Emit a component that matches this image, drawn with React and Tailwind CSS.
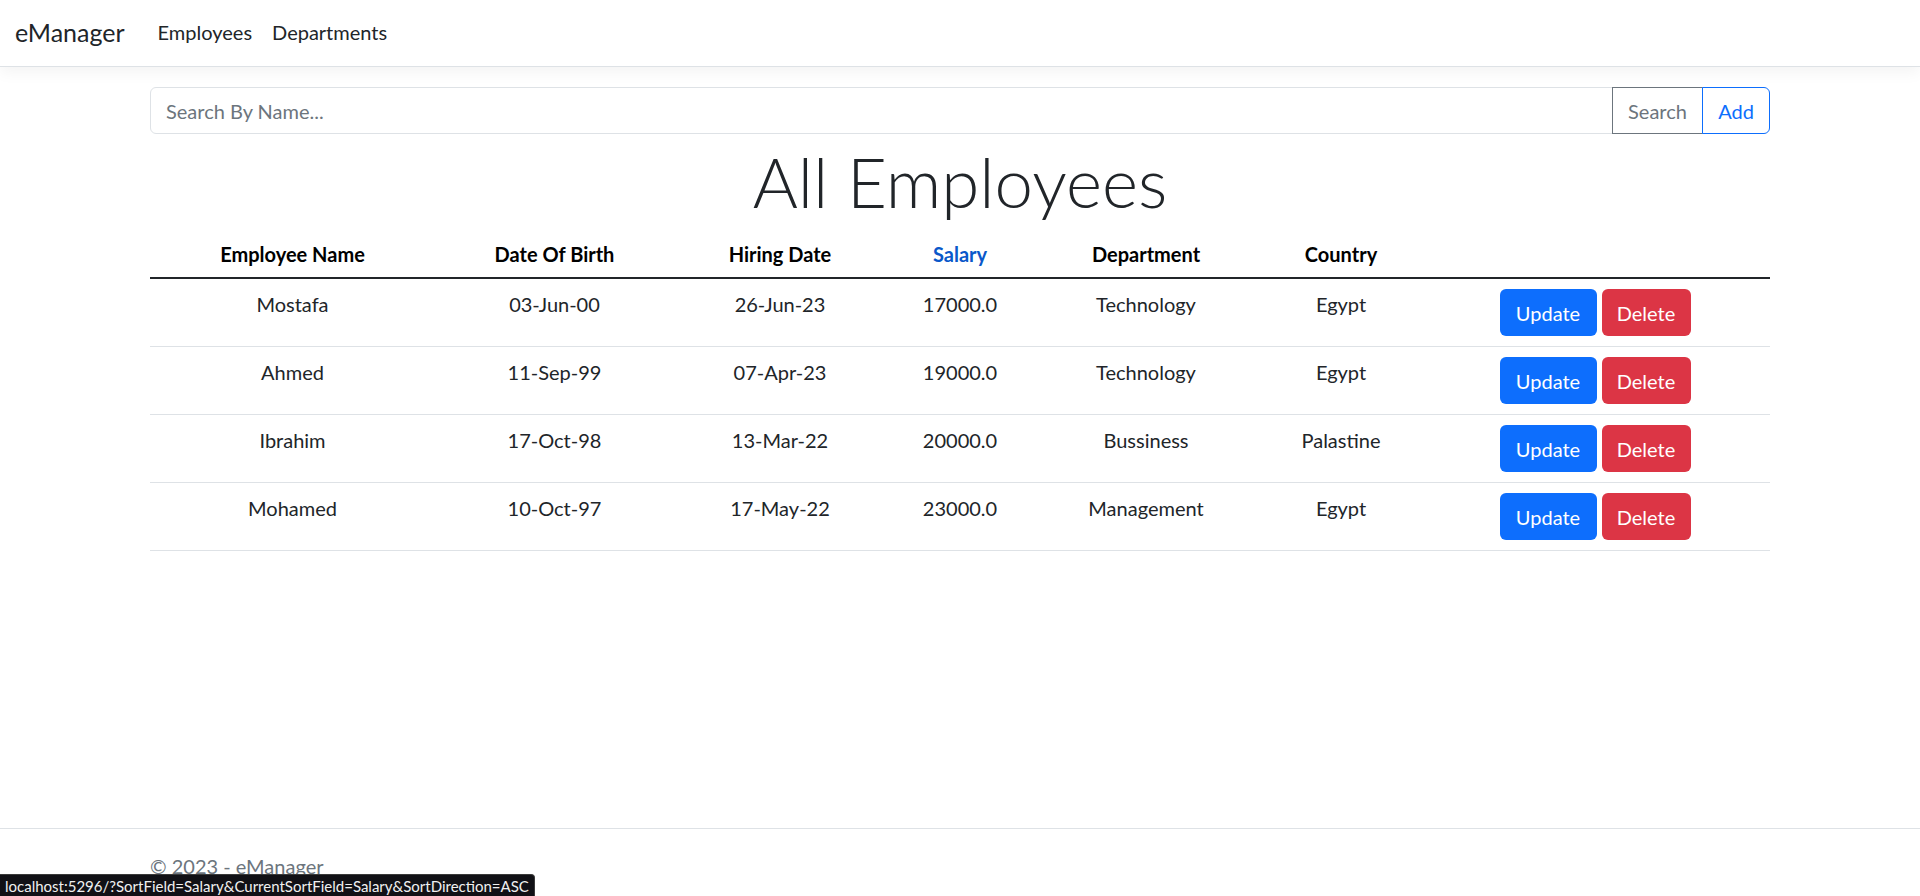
import React from "react";

const rows = [
  ["Mostafa", "03-Jun-00", "26-Jun-23", "17000.0", "Technology", "Egypt"],
  ["Ahmed", "11-Sep-99", "07-Apr-23", "19000.0", "Technology", "Egypt"],
  ["Ibrahim", "17-Oct-98", "13-Mar-22", "20000.0", "Bussiness", "Palastine"],
  ["Mohamed", "10-Oct-97", "17-May-22", "23000.0", "Management", "Egypt"],
];

export default function App() {
  return (
    <div className="relative h-[896px] overflow-hidden bg-white text-[#212529] font-['Lato','Segoe_UI',sans-serif]">
      <nav className="h-[67px] flex items-center px-[15px] pb-[2px] bg-white border-b border-[#dee2e6] shadow-[0_5px_15px_rgba(0,0,0,0.05)]">
        <span className="text-[25px] leading-[38px] mr-[23px] text-[#212529]">eManager</span>
        <a className="px-[10px] text-[20px] leading-[30px] text-[#212529]">Employees</a>
        <a className="px-[10px] text-[20px] leading-[30px] text-[#212529]">Departments</a>
      </nav>

      <main className="w-[1620px] mx-auto mt-[20px]">
        <div className="flex h-[47px]">
          <input
            className="flex-1 min-w-0 border border-[#dee2e6] rounded-l-[6px] px-[15px] text-[20px] leading-[30px] text-[#212529] placeholder:text-[#6c757d] outline-none"
            placeholder="Search By Name..."
          />
          <button className="-ml-px w-[91px] border border-[#6c757d] text-[#6c757d] text-[20px] leading-[30px] bg-white">
            Search
          </button>
          <button className="-ml-px w-[68px] border border-[#0d6efd] text-[#0d6efd] text-[20px] leading-[30px] rounded-r-[6px] bg-white">
            Add
          </button>
        </div>

        <h1 className="text-center text-[69px] leading-[96px] font-light text-[#212529]">All Employees</h1>

        <table className="w-full table-fixed border-collapse text-[20px] leading-[30px]">
          <colgroup>
            <col className="w-[285px]" />
            <col className="w-[239px]" />
            <col className="w-[212px]" />
            <col className="w-[148px]" />
            <col className="w-[224px]" />
            <col className="w-[166px]" />
            <col className="w-[346px]" />
          </colgroup>
          <thead>
            <tr className="border-b-2 border-[#212529]">
              <th className="pt-[9px] pb-[8px] font-bold text-black text-center">Employee Name</th>
              <th className="pt-[9px] pb-[8px] font-bold text-black text-center">Date Of Birth</th>
              <th className="pt-[9px] pb-[8px] font-bold text-black text-center">Hiring Date</th>
              <th className="pt-[9px] pb-[8px] font-bold text-[#0a58ca] text-center">Salary</th>
              <th className="pt-[9px] pb-[8px] font-bold text-black text-center">Department</th>
              <th className="pt-[9px] pb-[8px] font-bold text-black text-center">Country</th>
              <th className="pt-[9px] pb-[8px]"></th>
            </tr>
          </thead>
          <tbody>
            {rows.map((r) => (
              <tr key={r[0]} className="border-b border-[#dee2e6]">
                {r.map((c, i) => (
                  <td key={i} className="py-[10px] align-top text-center">
                    {c}
                  </td>
                ))}
                <td className="py-[10px] align-top">
                  <div className="flex justify-center gap-[5px] pr-[4px]">
                    <button className="h-[47px] w-[97px] rounded-[6px] bg-[#0d6efd] text-white text-[20px]">Update</button>
                    <button className="h-[47px] w-[89px] rounded-[6px] bg-[#dc3545] text-white text-[20px]">Delete</button>
                  </div>
                </td>
              </tr>
            ))}
          </tbody>
        </table>
      </main>

      <footer className="absolute left-0 right-0 top-[828px] border-t border-[#dee2e6] leading-[75px] text-[20px] text-[#6c757d]">
        <div className="w-[1620px] mx-auto">© 2023 - eManager</div>
      </footer>

      <div className="absolute left-0 bottom-0 h-[22px] px-[5px] rounded-tr-[4px] bg-[#111116] text-[#f0f0f0] text-[15px] leading-[22px] border border-[#3a3a3a] border-l-0 border-b-0">
        localhost:5296/?SortField=Salary&amp;CurrentSortField=Salary&amp;SortDirection=ASC
      </div>
    </div>
  );
}
